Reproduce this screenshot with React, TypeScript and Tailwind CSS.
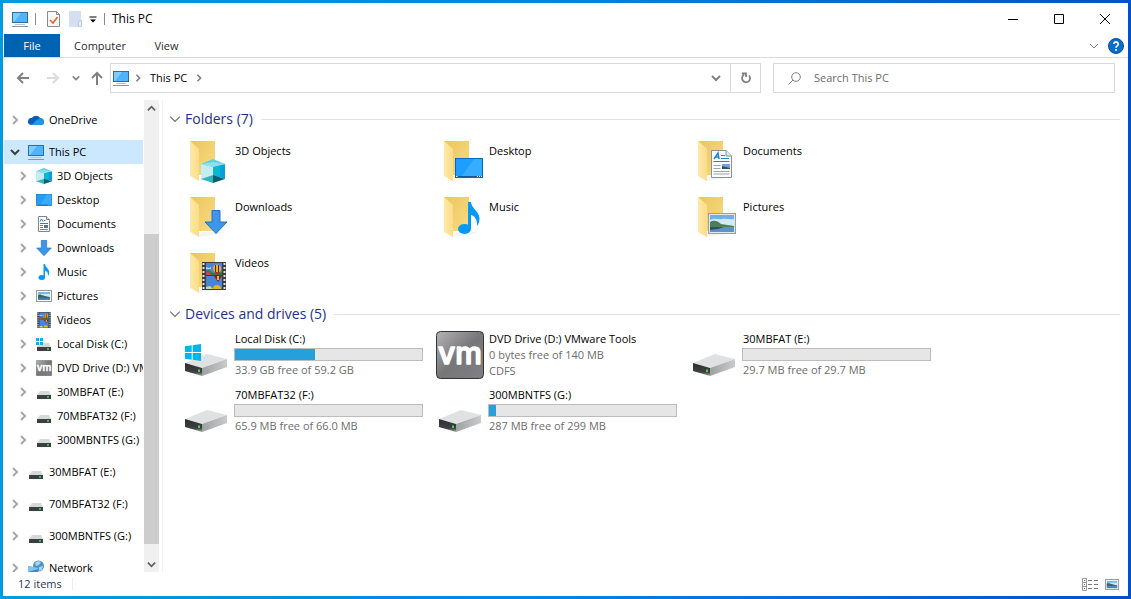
import React, { useState } from 'react';

interface IconProps {
  x?: number;
  y?: number;
  width?: number;
  height?: number;
}

type Icon = React.FC<IconProps>;

const Monitor: Icon = ({ width = 16, height = 16 }) => (
  <svg width={width} height={height} viewBox="0 0 16 16" preserveAspectRatio="none" className="shrink-0">
    <rect x="0.5" y="1.5" width="15" height="10" fill="#4fb4fb" stroke="#2a6f9f" />
    <path d="M1 2h8L2 11H1z" fill="#7fccff" />
    <path d="M3 13.5h10" stroke="#b4c3d1" />
    <path d="M0 15.5h16" stroke="#8195a8" />
  </svg>
);

const Cloud: Icon = () => (
  <svg width="16" height="16" viewBox="0 0 16 16" className="shrink-0">
    <path d="M4 6a5 5 0 0 1 8 0 3.6 3.6 0 0 1 4 4 3 3 0 0 1-3 3H3A3.3 3.3 0 0 1 4 6z" fill="#0f78d4" />
    <path d="M3.8 6a5 5 0 0 1 7.7-.6L14 9 5 12.5 1 11.5A3.500 3.500 0 0 1 3.800 6z" fill="#0a5cb4" />
    <path d="M8 8.500l4-2.200a3.600 3.600 0 0 1 4 3.700 3 3 0 0 1-3 3H3.500z" fill="#1e98ea" />
  </svg>
);

const Cube: Icon = ({ x, y, width = 16, height = 16 }) => (
  <svg x={x} y={y} width={width} height={height} viewBox="0 0 24 24" preserveAspectRatio="none" className="shrink-0">
    <path d="M0 5L12 0l12 5-12 4z" fill="#5fd0de" />
    <path d="M0 5l12 3v8L0 20z" fill="#c5edf0" />
    <path d="M24 5L12 8v8l12 4z" fill="#00a0d8" />
    <path d="M12 8l7-2v12l-7-2z" fill="#08b9cf" />
    <path d="M0 20l12-4v8z" fill="#35b4bf" />
    <path d="M24 20l-12-4v8z" fill="#04606f" />
    <path d="M0 5l12 3 12-3-12-2z" fill="#8fe0ea" />
  </svg>
);

const DesktopScreen: Icon = ({ x, y, width = 16, height = 12 }) => (
  <svg x={x} y={y} width={width} height={height} viewBox="0 0 28 20" preserveAspectRatio="none" className="shrink-0">
    <rect x="0.500" y="0.500" width="27" height="19" fill="#1e9fff" stroke="#0069b8" />
    <path d="M19 1h8v17H7z" fill="#38acff" />
    <path d="M1 18.500h26" stroke="#0a5c9e" />
    <path d="M1 18.500h1.500M22 18.500h1M24 18.500h1M26 18.500h1" stroke="#fff" />
  </svg>
);

const DocumentPage: Icon = ({ x, y, width = 21, height = 28 }) => (
  <svg x={x} y={y} width={width} height={height} viewBox="0 0 21 28" className="shrink-0">
    <path d="M.5.5H15l5.500 5.500v21.500H.5z" fill="#fbfcfd" stroke="#8a9299" />
    <path d="M15 .5V6h5.500" fill="#e3e6e9" stroke="#8a9299" />
    <path d="M3 9l4-6 1 6M4.500 7h3" fill="none" stroke="#1c8ad1" strokeWidth="1.500" />
    <path d="M10 5.500h4M10 8.500h8M2.500 11.500h16" stroke="#1c8ad1" />
    <path d="M2.500 15.500h7M2.500 18.500h7M2.500 21.500h16M2.500 24h16" stroke="#a0a4a8" />
    <path d="M11 14h8v5h-8z" fill="#6fa6dc" />
    <path d="M11 16l8 2v1h-8z" fill="#34593d" />
  </svg>
);

const SmallDocument: Icon = () => (
  <svg width="16" height="16" viewBox="0 0 16 16" className="shrink-0">
    <path d="M2.500.5h8l3 3v12h-11z" fill="#fcfcfc" stroke="#7d858c" />
    <path d="M10.500.5v3h3" fill="#e3e6e9" stroke="#7d858c" />
    <path d="M4 5.500l1.500-2.500L7 5.500M8 4.500h1.500M4 7.500h8" fill="none" stroke="#2a7fc4" />
    <path d="M4 9.500h3M4 11.500h3M4 13.500h8" stroke="#7a8086" />
    <path d="M8 9h4v3H8z" fill="#4b7897" />
  </svg>
);

const DownArrow: Icon = ({ x, y, width = 16, height = 16 }) => (
  <svg x={x} y={y} width={width} height={height} viewBox="0 0 24 24" className="shrink-0">
    <path d="M8 .5h8V12h7L12 23.500 1 12h7z" fill="#3c97e8" stroke="#2272bd" />
  </svg>
);

const Note: Icon = ({ x, y, width = 16, height = 16 }) => (
  <svg x={x} y={y} width={width} height={height} viewBox="0 0 22 32" className="shrink-0">
    <ellipse cx="6.500" cy="27" rx="6.500" ry="5" fill="#0799f5" />
    <path d="M10 0h3c0 6 8 9 8.500 16 0 4-1 6-2.500 8 .5-6-2-10-6-11v14h-3z" fill="#0799f5" />
  </svg>
);

const Picture: Icon = ({ x, y, width = 16, height = 12 }) => (
  <svg x={x} y={y} width={width} height={height} viewBox="0 0 28 21" preserveAspectRatio="none" className="shrink-0">
    <rect x="0.500" y="0.500" width="27" height="20" fill="#fff" stroke="#999fa5" strokeWidth="1.500" />
    <path d="M2 2h24v17H2z" fill="#6fb0ec" />
    <path d="M2 7c5-3 8 0 12-1s8 1 12 0v7H2z" fill="#d3e9f8" />
    <path d="M2 9c3-2 7-2 11 2l13 2v1H2z" fill="#4d7d5d" />
    <path d="M2 14h24v5H2z" fill="#5b93c8" />
    <path d="M2 14h14l-6 2-8 1z" fill="#2f5550" />
  </svg>
);

// 16px variant keeps a full pixel of frame and mat on each side
const SmallPicture: Icon = ({ width = 16, height = 12 }) => (
  <svg width={width} height={height} viewBox="0 0 16 12" preserveAspectRatio="none" className="shrink-0">
    <rect x="0.500" y="0.500" width="15" height="11" fill="#fff" stroke="#93989d" />
    <path d="M2 2h12v8H2z" fill="#7ab6ee" />
    <path d="M5 4h9v3H5z" fill="#cfe6f7" />
    <path d="M2 5c3-1 5 1 12 2v1H2z" fill="#3b6a55" />
    <path d="M2 8h12v2H2z" fill="#4980b0" />
  </svg>
);

const Film: Icon = ({ x, y, width = 16, height = 16 }) => (
  <svg x={x} y={y} width={width} height={height} viewBox="0 0 24 28" className="shrink-0">
    <path d="M0 0h24v28H0z" fill="#3c3c3c" />
    <path d="M1.500 1v27M22.500 1v27" stroke="#e4e4e4" strokeWidth="2" strokeDasharray="2 2" />
    <path d="M4 1h16v12H4zM4 14h16v13H4z" fill="#4a83dc" />
    <path d="M4 9l3-1 4 3 9-1v3H4z" fill="#2c7f3a" />
    <path d="M4 10l3-1 2 4H4z" fill="#dd3b4a" />
    <path d="M4 5l3 1 2-1v2H4z" fill="#b9d6f4" />
    <circle cx="15" cy="6.500" r="4" fill="#e6b422" />
    <path d="M13.500 3v7M16.500 3v7" stroke="#4a2333" />
    <path d="M12.500 10h5l-2 3z" fill="#c8281f" />
    <path d="M12 14h8l-4 6z" fill="#7d2334" />
    <path d="M15 14h2v4h-2z" fill="#e6c022" />
    <path d="M11 27a4 4 0 0 1 8 0z" fill="#e6b422" />
    <path d="M4 25l4-1 3 3H4z" fill="#c9d8a0" />
  </svg>
);

const WindowsLogo: Icon = ({ x, y, width = 16, height = 17 }) => (
  <svg x={x} y={y} width={width} height={height} viewBox="0 0 16 17" preserveAspectRatio="none">
    <path d="M0 2.300L6.700 1.300V8H0zM7.700 1.200L16 0v8H7.700zM0 9h6.700v6.700L0 14.700zM7.700 9H16v8l-8.300-1.200z" fill="#00b6f1" />
  </svg>
);

const SmallDrive: Icon = () => (
  <svg width="16" height="16" viewBox="0 0 16 16" className="shrink-0">
    <path d="M4 7h9l2 4H1z" fill="#d6d8da" />
    <path d="M1 11h14v4H1z" fill="#3c3f42" />
    <path d="M11 13h2" stroke="#3fe04c" strokeWidth="1.500" />
  </svg>
);

const SmallSystemDrive: Icon = () => (
  <svg width="16" height="16" viewBox="0 0 16 16" className="shrink-0">
    <path d="M4 7h9l2 4H1z" fill="#d6d8da" />
    <path d="M1 11h14v4H1z" fill="#3c3f42" />
    <path d="M11 13h2" stroke="#3fe04c" strokeWidth="1.500" />
    <path d="M0 2h3v3H0zM4 2h3v3H4zM0 6h3v3H0zM4 6h3v3H4z" fill="#14aee8" />
  </svg>
);

const VmDisc: Icon = ({ width = 16, height = 16 }) => (
  <svg width={width} height={height} viewBox="0 0 48 48" className="shrink-0">
    <defs>
      <linearGradient id="vm" x1="0" y1="0" x2="1" y2="1">
        <stop offset="0" stopColor="#b4b4b5" />
        <stop offset="0.500" stopColor="#77777a" />
        <stop offset="1" stopColor="#7f7e82" />
      </linearGradient>
    </defs>
    <rect x="0.500" y="0.500" width="47" height="47" rx="4" fill="url(#vm)" stroke="#333" />
    <text
      x="24"
      y="33"
      textAnchor="middle"
      fontFamily="Inter, sans-serif"
      fontSize="30"
      fontWeight="500"
      fill="#fff"
      stroke="#fff"
      strokeWidth="1.500"
      strokeLinejoin="round"
    >
      vm
    </text>
  </svg>
);

const NetworkGlobe: Icon = () => (
  <svg width="16" height="16" viewBox="0 0 16 16" className="shrink-0">
    <circle cx="10.500" cy="6" r="5.500" fill="#4f93c0" />
    <path d="M7 3c2-2 4-2 6-1l-2 3-3 1zM11 7l4-1-1 4-3 1z" fill="#a5d4ef" />
    <path d="M0 6l10 2v7L0 13z" fill="#2c8fd0" />
    <path d="M0 6l10 2v1L0 12z" fill="#7cc6ee" />
    <path d="M2 15l6 1" stroke="#8a9aa8" />
  </svg>
);

const FolderTile: React.FC<{ children: React.ReactNode }> = ({ children }) => (
  <svg width="48" height="48" viewBox="0 0 48 48" className="shrink-0">
    <defs>
      <linearGradient id="folderBack" x1="0" y1="0" x2="1" y2="1">
        <stop offset="0" stopColor="#eac65f" />
        <stop offset="1" stopColor="#fadb82" />
      </linearGradient>
      <linearGradient id="folderFront" x1="0" y1="0" x2="1" y2="0">
        <stop offset="0" stopColor="#ffe9a6" />
        <stop offset="1" stopColor="#fcdc88" />
      </linearGradient>
    </defs>
    <path d="M16 45l5-5h22l-6 2z" fill="#f4f4f4" />
    <path d="M8 5h25v34H8z" fill="url(#folderBack)" />
    <path d="M8 5l9 8v32l-9-5z" fill="url(#folderFront)" />
    {children}
  </svg>
);

const DriveTile: React.FC<{ system?: boolean }> = ({ system }) => (
  <svg width="48" height="48" viewBox="0 0 48 48" className="shrink-0">
    <defs>
      <linearGradient id="driveSide" x1="0" y1="0" x2="1" y2="0">
        <stop offset="0" stopColor="#9fa1a3" />
        <stop offset="1" stopColor="#c9cacc" />
      </linearGradient>
      <linearGradient id="driveFront" x1="0" y1="0" x2="0" y2="1">
        <stop offset="0" stopColor="#2e2f30" />
        <stop offset="0.700" stopColor="#3d3f40" />
        <stop offset="1" stopColor="#a8a8a8" />
      </linearGradient>
    </defs>
    <path d="M3 32l22-9 20 5-25 9z" fill="#e0e1e3" />
    <path d="M20 37l25-9v8l-25 9z" fill="url(#driveSide)" />
    <path d="M3 32l17 5v8L3 40z" fill="url(#driveFront)" />
    <path d="M17 38.500v2.500" stroke="#35e03c" strokeWidth="2" />
    {system && <WindowsLogo x={3} y={13} width={16} height={17} />}
  </svg>
);

interface ChevronProps {
  dir: 'right' | 'down' | 'up';
  className?: string;
  size?: number;
  stroke?: number;
}

const chevronPaths = { right: 'M3 1l4 4-4 4', down: 'M1 3l4 4 4-4', up: 'M1 7l4-4 4 4' };

const Chevron: React.FC<ChevronProps> = ({ dir, className = 'text-[#808080]', size = 10, stroke = 2 }) => (
  <svg width={size} height={size} viewBox="0 0 10 10" fill="none" stroke="currentColor" strokeWidth={stroke} className={`shrink-0 ${className}`}>
    <path d={chevronPaths[dir]} />
  </svg>
);

interface TreeItem {
  label: string;
  icon: Icon;
  children?: TreeItem[];
}

const tree: TreeItem[] = [
  { label: 'OneDrive', icon: Cloud },
  {
    label: 'This PC',
    icon: Monitor,
    children: [
      { label: '3D Objects', icon: Cube },
      { label: 'Desktop', icon: DesktopScreen },
      { label: 'Documents', icon: SmallDocument },
      { label: 'Downloads', icon: DownArrow },
      { label: 'Music', icon: Note },
      { label: 'Pictures', icon: SmallPicture },
      { label: 'Videos', icon: Film },
      { label: 'Local Disk (C:)', icon: SmallSystemDrive },
      { label: 'DVD Drive (D:) VMware Tools', icon: VmDisc },
      { label: '30MBFAT (E:)', icon: SmallDrive },
      { label: '70MBFAT32 (F:)', icon: SmallDrive },
      { label: '300MBNTFS (G:)', icon: SmallDrive },
    ],
  },
  { label: '30MBFAT (E:)', icon: SmallDrive },
  { label: '70MBFAT32 (F:)', icon: SmallDrive },
  { label: '300MBNTFS (G:)', icon: SmallDrive },
  { label: 'Network', icon: NetworkGlobe },
];

const folders = [
  { name: '3D Objects', overlay: <Cube x={19} y={23} width={24} height={24} /> },
  { name: 'Desktop', overlay: <DesktopScreen x={19} y={22} width={28} height={20} /> },
  { name: 'Documents', overlay: <DocumentPage x={21} y={14} width={21} height={28} /> },
  { name: 'Downloads', overlay: <DownArrow x={22} y={18} width={24} height={24} /> },
  { name: 'Music', overlay: <Note x={22} y={10} width={22} height={32} /> },
  { name: 'Pictures', overlay: <Picture x={18} y={21} width={28} height={21} /> },
  { name: 'Videos', overlay: <Film x={20} y={14} width={24} height={28} /> },
];

const drives = [
  { name: 'Local Disk (C:)', icon: <DriveTile system />, used: 43, details: ['33.9 GB free of 59.2 GB'] },
  { name: 'DVD Drive (D:) VMware Tools', icon: <VmDisc width={48} height={48} />, details: ['0 bytes free of 140 MB', 'CDFS'] },
  { name: '30MBFAT (E:)', icon: <DriveTile />, used: 0, details: ['29.7 MB free of 29.7 MB'] },
  { name: '70MBFAT32 (F:)', icon: <DriveTile />, used: 0, details: ['65.9 MB free of 66.0 MB'] },
  { name: '300MBNTFS (G:)', icon: <DriveTile />, used: 4, details: ['287 MB free of 299 MB'] },
];

const TreeRow: React.FC<{ item: TreeItem; nested?: boolean; selected?: boolean }> = ({ item, nested, selected }) => {
  const ItemIcon = item.icon;
  return (
    <button
      type="button"
      className={`flex h-6 w-full items-center text-left whitespace-nowrap ${nested ? 'pl-[14px]' : 'pl-[6px]'} ${selected ? 'bg-[#cce8ff]' : ''}`}
    >
      <Chevron dir={item.children ? 'down' : 'right'} className={item.children ? 'text-[#404040]' : 'text-[#a6a6a6]'} />
      <span className="ml-2 flex w-4 shrink-0 justify-center">
        <ItemIcon />
      </span>
      <span className="ml-[5px]">{item.label}</span>
    </button>
  );
};

const SectionHeader: React.FC<{ title: string }> = ({ title }) => (
  <div className="flex h-5 items-center pr-2 pl-[6px]">
    <Chevron dir="down" size={12} stroke={1} className="text-[#707070]" />
    <h2 className="ml-1 text-[14px] leading-5 text-[#1e3287]">{title}</h2>
    <div className="ml-2 h-px grow bg-[#e2e2e2]" />
  </div>
);

export default function App() {
  const [query, setQuery] = useState('');

  return (
    <div className="h-screen bg-linear-to-r from-[#009bdf] via-[#0084e4] to-[#0052c4] p-[3px] font-['Open_Sans',sans-serif] text-[11px] leading-4 text-black">
      <div className="flex h-full flex-col bg-white">
        {/* Title bar */}
        <header className="flex h-[31px] shrink-0 items-center pl-[9px]">
          <Monitor />
          <span className="ml-[7px] h-3 w-px bg-[#8a8a8a]" />
          <button type="button" aria-label="Properties" className="ml-[11px]">
            <svg width="13" height="16" viewBox="0 0 13 16">
              <path d="M.5.5h9l3 3v12H.5z" fill="#f8f8f8" stroke="#8a8a8a" />
              <path d="M9.500.5v3h3" fill="none" stroke="#8a8a8a" />
              <path d="M3 9l3 3 4.500-6" fill="none" stroke="#e8632a" strokeWidth="1.500" />
            </svg>
          </button>
          <button type="button" aria-label="New folder" className="ml-[9px]">
            <svg width="14" height="16" viewBox="0 0 14 16">
              <path d="M0 0h12v16H0z" fill="#d5dff1" />
              <path d="M10.500 9.500h2v6h-3v-4z" fill="#e6ecf7" stroke="#bccbe6" />
            </svg>
          </button>
          <button type="button" aria-label="Customize Quick Access Toolbar" className="ml-[6px]">
            <svg width="8" height="8" viewBox="0 0 8 8">
              <path d="M.5 2h7" stroke="#000" />
              <path d="M1 4.500h6l-3 3z" fill="#000" />
            </svg>
          </button>
          <span className="ml-[7px] h-3 w-px bg-[#8a8a8a]" />
          <h1 className="ml-[7px] text-[12px]">This PC</h1>
          <div className="ml-auto flex h-full">
            <button type="button" aria-label="Minimize" className="flex w-[46px] items-center justify-center">
              <svg width="10" height="10" viewBox="0 0 10 10" stroke="#000">
                <path d="M0 5.500h10" />
              </svg>
            </button>
            <button type="button" aria-label="Maximize" className="flex w-[46px] items-center justify-center">
              <svg width="10" height="10" viewBox="0 0 10 10" fill="none" stroke="#000">
                <path d="M.5.5h9v9h-9z" />
              </svg>
            </button>
            <button type="button" aria-label="Close" className="flex w-[46px] items-center justify-center">
              <svg width="10" height="10" viewBox="0 0 10 10" stroke="#000">
                <path d="M0 0l10 10M10 0L0 10" />
              </svg>
            </button>
          </div>
        </header>

        {/* Ribbon tabs */}
        <nav className="flex h-6 shrink-0 items-stretch border-b border-[#dadbdc] pr-1 pl-px text-[#2b2b2b]">
          <button type="button" className="w-14 bg-[#0063b1] text-white">File</button>
          <button type="button" className="w-20">Computer</button>
          <button type="button" className="w-[53px]">View</button>
          <div className="ml-auto flex items-center gap-[9px]">
            <button type="button" aria-label="Expand the Ribbon">
              <Chevron dir="down" stroke={1} className="text-[#8a8a8a]" />
            </button>
            <button type="button" aria-label="Help">
              <svg width="16" height="16" viewBox="0 0 16 16">
                <circle cx="8" cy="8" r="7.500" fill="#0a6ccb" stroke="#0b4f8c" />
                <path d="M5.800 6a2.200 2.200 0 1 1 3.400 1.900Q8 8.700 8 9.700M8 11v1.800" fill="none" stroke="#fff" strokeWidth="1.700" />
              </svg>
            </button>
          </div>
        </nav>

        {/* Navigation bar */}
        <div className="flex h-[42px] shrink-0 items-center pr-[13px] pb-[2px] pl-[13px] text-[#808080]">
          <button type="button" aria-label="Back">
            <svg width="14" height="14" viewBox="0 0 14 14" fill="none" stroke="currentColor" strokeWidth="2">
              <path d="M13 7H2M7 2L2 7l5 5" />
            </svg>
          </button>
          <button type="button" aria-label="Forward" className="ml-4 text-[#dcdcdc]">
            <svg width="14" height="14" viewBox="0 0 14 14" fill="none" stroke="currentColor" strokeWidth="2">
              <path d="M1 7h11M7 2l5 5-5 5" />
            </svg>
          </button>
          <button type="button" aria-label="Recent locations" className="ml-3">
            <Chevron dir="down" size={8} />
          </button>
          <button type="button" aria-label="Up" className="ml-[10px]">
            <svg width="14" height="14" viewBox="0 0 14 14" fill="none" stroke="currentColor" strokeWidth="2">
              <path d="M7 14V2M2 7l5-5 5 5" />
            </svg>
          </button>
          <div className="ml-[6px] flex h-[30px] grow items-center border border-[#d9d9d9] pl-[2px]">
            <Monitor />
            <span className="ml-[5px]"><Chevron dir="right" size={8} /></span>
            <button type="button" className="ml-2 text-black">This PC</button>
            <span className="ml-2"><Chevron dir="right" size={8} /></span>
            <button type="button" aria-label="Previous locations" className="ml-auto mr-[9px]">
              <Chevron dir="down" />
            </button>
            <button type="button" aria-label="Refresh" className="flex h-full w-[30px] items-center justify-center border-l border-[#d9d9d9]">
              <svg width="12" height="12" viewBox="0 0 12 12" fill="none" stroke="currentColor" strokeWidth="1.800">
                <path d="M9 3.500A4 4 0 1 1 4 2.800M2 1.500h4v3.500" />
              </svg>
            </button>
          </div>
          <label className="ml-3 flex h-[30px] w-[342px] items-center border border-[#d9d9d9] pl-[14px]">
            <svg width="13" height="13" viewBox="0 0 13 13" fill="none" stroke="#808080" className="shrink-0">
              <circle cx="8" cy="5" r="4.300" />
              <path d="M5 8L.5 12.500" />
            </svg>
            <input
              type="text"
              aria-label="Search This PC"
              placeholder="Search This PC"
              value={query}
              onChange={(e) => setQuery(e.target.value)}
              className="ml-[13px] min-w-0 grow outline-none placeholder:text-[#6d6d6d]"
            />
          </label>
        </div>

        <div className="flex min-h-0 grow">
          {/* Navigation pane */}
          <aside className="flex w-[160px] shrink-0 overflow-hidden border-r border-[#f2f2f2] pl-px">
            <ul className="flex w-[139px] shrink-0 flex-col gap-2 overflow-hidden pt-2">
              {tree.map((item) => (
                <li key={item.label}>
                  <TreeRow item={item} selected={!!item.children} />
                  {item.children && (
                    <ul>
                      {item.children.map((child) => (
                        <li key={child.label}>
                          <TreeRow item={child} nested />
                        </li>
                      ))}
                    </ul>
                  )}
                </li>
              ))}
            </ul>
            <div className="ml-px flex w-[15px] flex-col bg-[#f0f0f0]">
              <button type="button" aria-label="Scroll up" className="flex h-[17px] items-center justify-center">
                <Chevron dir="up" size={9} className="text-[#606060]" />
              </button>
              <div className="flex-[117]" />
              <div className="flex-[310] bg-[#cdcdcd]" />
              <button type="button" aria-label="Scroll down" className="flex h-7 items-center justify-center pt-3">
                <Chevron dir="down" size={9} className="text-[#606060]" />
              </button>
            </div>
          </aside>

          {/* Contents */}
          <main className="min-w-0 grow overflow-hidden pt-[9px]">
            <SectionHeader title="Folders (7)" />
            <div className="grid grid-cols-[repeat(auto-fill,254px)] pt-[7px] pl-[19px]">
              {folders.map((folder) => (
                <div key={folder.name} className="flex h-14">
                  <FolderTile>{folder.overlay}</FolderTile>
                  <span className="pt-[7px] pl-[5px]">{folder.name}</span>
                </div>
              ))}
            </div>
            <SectionHeader title="Devices and drives (5)" />
            <div className="grid grid-cols-[repeat(auto-fill,254px)] pt-[7px] pl-[19px]">
              {drives.map((drive) => (
                <div key={drive.name} className="flex h-14">
                  {drive.icon}
                  <div className="pl-1">
                    <div className="pl-px">{drive.name}</div>
                    {drive.used !== undefined && (
                      <div
                        role="meter"
                        aria-label={`${drive.name} space used`}
                        aria-valuenow={drive.used}
                        className="my-px h-[13px] w-[189px] border border-[#bcbcbc] bg-[#e6e6e6]"
                      >
                        <div className="h-full bg-[#26a0da]" style={{ width: `${drive.used}%` }} />
                      </div>
                    )}
                    {drive.details.map((line) => (
                      <div key={line} className="pl-px text-[#6d6d6d]">{line}</div>
                    ))}
                  </div>
                </div>
              ))}
            </div>
          </main>
        </div>

        {/* Status bar */}
        <footer className="flex h-6 shrink-0 items-center pr-[9px] pl-[15px] text-[#1e395b]">
          <span>12 items</span>
          <span className="ml-[10px] h-3 w-px bg-[#ececec]" />
          <div className="ml-auto flex items-center gap-[7px]">
            <button type="button" aria-label="Details view">
              <svg width="16" height="13" viewBox="0 0 16 13" fill="none">
                <path d="M.5.5h4v12h-4zM.5 4.500h4M.5 8.500h4" stroke="#999" />
                <path d="M6 2.500h4M12 2.500h4M6 6.500h4M12 6.500h4M6 10.500h4M12 10.500h4" stroke="#777" />
                <path d="M2 2.500h1M2 6.500h1" stroke="#2a7fd0" />
                <path d="M2 10.500h1" stroke="#d02a2a" />
              </svg>
            </button>
            <button type="button" aria-label="Large icons view">
              <SmallPicture width={14} height={11} />
            </button>
          </div>
        </footer>
      </div>
    </div>
  );
}
